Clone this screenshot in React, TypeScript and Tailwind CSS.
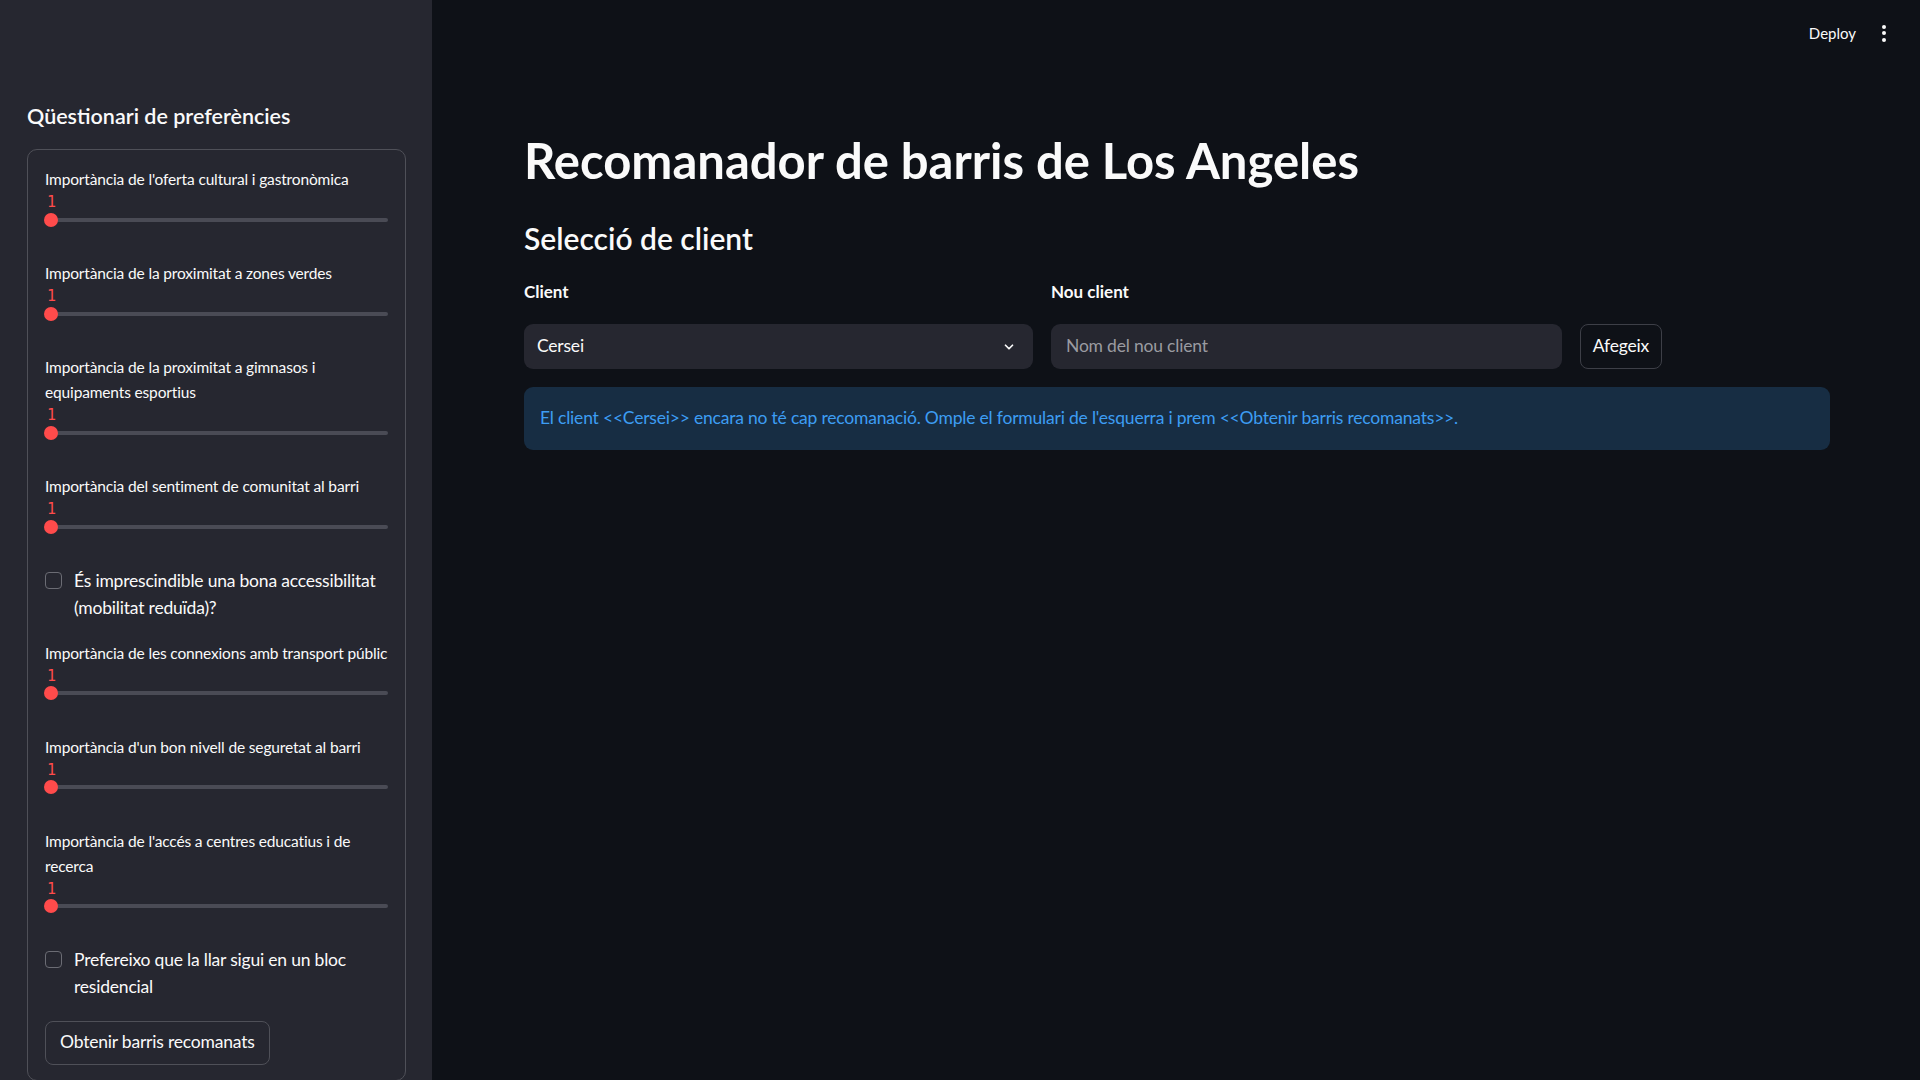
import React from 'react';

const font = { fontFamily: 'Lato, "Noto Sans", sans-serif' };

const Slider: React.FC<{ label: string }> = ({ label }) => (
  <div>
    <div className="mr-[-6px] text-[15.5px] leading-[25px] tracking-[-0.15px] text-[#fafafa]">{label}</div>
    <div className="h-[21px] pl-[2px] text-[15px] leading-[21px] text-[#ff4b4b] [font-family:'DejaVu_Sans_Mono',monospace]">1</div>
    <div className="relative flex h-[13px] items-center">
      <div className="h-[4px] w-full rounded-full bg-[#4a4b55]" />
      <div className="absolute left-[-1px] top-1/2 h-[14px] w-[14px] -translate-y-1/2 rounded-full bg-[#ff4b4b]" />
    </div>
  </div>
);

const Check: React.FC<{ label: string }> = ({ label }) => (
  <div className="flex items-start gap-[12px]">
    <div className="mt-[5px] h-[17px] w-[17px] shrink-0 rounded-[4px] border border-[#6b6c74]" />
    <div className="text-[17.5px] leading-[27px] tracking-[-0.2px] text-[#fafafa]">{label}</div>
  </div>
);

export default function App() {
  return (
    <div className="flex h-[1080px] w-[1920px] overflow-hidden bg-[#0e1117] text-[#fafafa]" style={font}>
      {/* Sidebar */}
      <aside className="h-full w-[432px] shrink-0 bg-[#262730] pl-[27px] pr-[26px] pt-[100px]">
        <h3 className="text-[21.5px] font-semibold leading-[32px]">Qüestionari de preferències</h3>
        <div className="mt-[17px] rounded-[10px] border border-[#4f5058] px-[17px] pb-[15px] pt-[17px]">
          <Slider label="Importància de l'oferta cultural i gastronòmica" />
          <div className="mt-[35px]">
            <Slider label="Importància de la proximitat a zones verdes" />
          </div>
          <div className="mt-[35px]">
            <Slider label="Importància de la proximitat a gimnasos i equipaments esportius" />
          </div>
          <div className="mt-[35px]">
            <Slider label="Importància del sentiment de comunitat al barri" />
          </div>
          <div className="mt-[34px]">
            <Check label="És imprescindible una bona accessibilitat (mobilitat reduïda)?" />
          </div>
          <div className="mt-[19.5px]">
            <Slider label="Importància de les connexions amb transport públic" />
          </div>
          <div className="mt-[35px]">
            <Slider label="Importància d'un bon nivell de seguretat al barri" />
          </div>
          <div className="mt-[35px]">
            <Slider label="Importància de l'accés a centres educatius i de recerca" />
          </div>
          <div className="mt-[33px]">
            <Check label="Prefereixo que la llar sigui en un bloc residencial" />
          </div>
          <button className="mt-[21px] h-[44px] rounded-[8px] border border-[#4f5058] px-[14px] text-[17.5px] tracking-[-0.2px] text-[#fafafa]">
            Obtenir barris recomanats
          </button>
        </div>
      </aside>

      {/* Main */}
      <main className="flex min-w-0 flex-1 flex-col">
        <header className="flex h-[66px] items-center justify-end gap-[26px] pr-[34px]">
          <span className="text-[15px]">Deploy</span>
          <div className="flex flex-col gap-[2.5px]">
            <span className="h-[4px] w-[4px] rounded-full bg-[#fafafa]" />
            <span className="h-[4px] w-[4px] rounded-full bg-[#fafafa]" />
            <span className="h-[4px] w-[4px] rounded-full bg-[#fafafa]" />
          </div>
        </header>

        <div className="pl-[92px] pr-[90px]">
          <h1 className="mt-[64px] text-[49px] font-bold leading-[60px]">Recomanador de barris de Los Angeles</h1>
          <h3 className="mt-[28px] text-[30px] font-semibold leading-[40px]">Selecció de client</h3>

          <div className="mt-[21px] flex gap-[18px]">
            <div className="w-[509px]">
              <div className="text-[17px] font-bold leading-[26px]">Client</div>
              <div className="mt-[19px] flex h-[45px] items-center justify-between rounded-[9px] bg-[#262730] pl-[13px] pr-[17px]">
                <span className="text-[17.5px] tracking-[-0.2px]">Cersei</span>
                <svg width="14" height="14" viewBox="0 0 24 24" fill="none" stroke="#fafafa" strokeWidth="3" strokeLinecap="round" strokeLinejoin="round">
                  <path d="M6 9l6 6 6-6" />
                </svg>
              </div>
            </div>
            <div className="w-[511px]">
              <div className="text-[17px] font-bold leading-[26px]">Nou client</div>
              <div className="mt-[19px] flex h-[45px] items-center rounded-[9px] bg-[#262730] pl-[15px]">
                <span className="text-[17.5px] tracking-[-0.2px] text-[#9a9ba1]">Nom del nou client</span>
              </div>
            </div>
            <div className="flex flex-col">
              <div className="h-[26px]" />
              <button className="mt-[19px] flex h-[45px] w-[82px] items-center justify-center rounded-[8px] border border-[#3d3f47] text-[17.5px] tracking-[-0.2px]">
                Afegeix
              </button>
            </div>
          </div>

          <div className="mt-[18px] flex h-[63px] items-center rounded-[9px] bg-[#172d43] px-[16px]">
            <span className="text-[17.5px] tracking-[-0.2px] text-[#3d9df3]">
              El client &lt;&lt;Cersei&gt;&gt; encara no té cap recomanació. Omple el formulari de l'esquerra i prem &lt;&lt;Obtenir barris recomanats&gt;&gt;.
            </span>
          </div>
        </div>
      </main>
    </div>
  );
}
